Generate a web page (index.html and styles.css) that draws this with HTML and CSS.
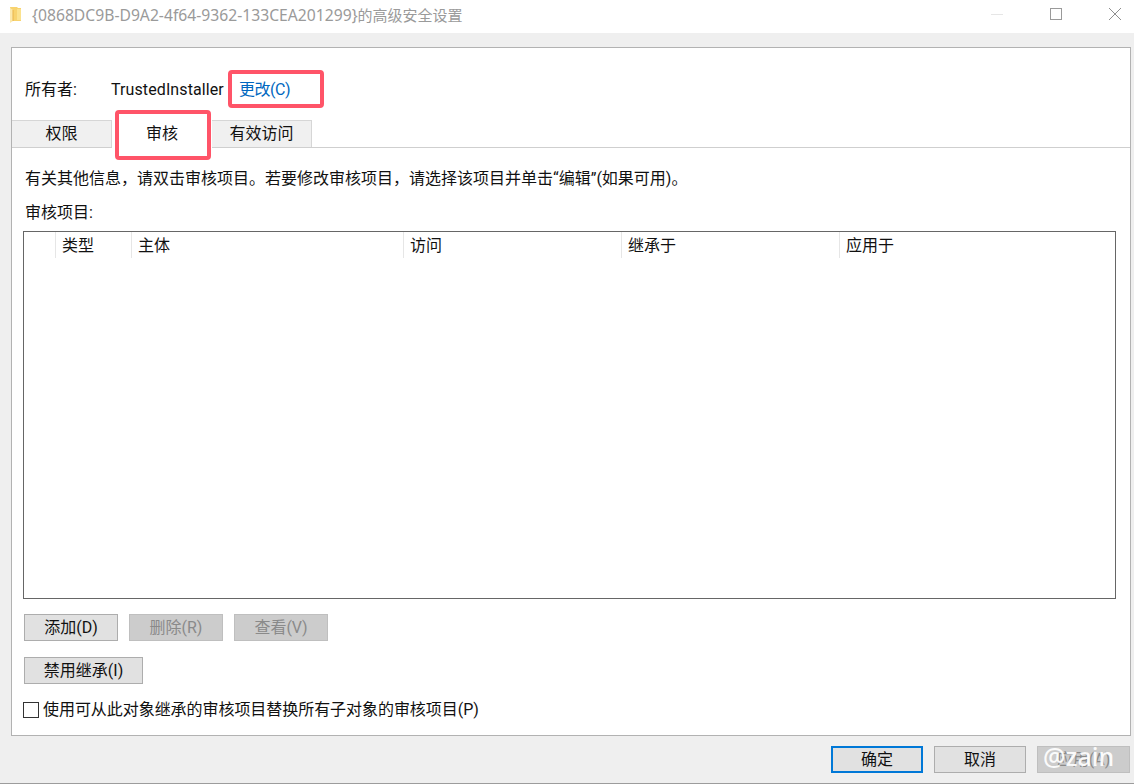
FILE: index.html
```html
<!DOCTYPE html>
<html lang="zh-CN">
<head>
<meta charset="utf-8">
<title>高级安全设置</title>
<link rel="stylesheet" href="styles.css">
</head>
<body>
<div class="window">
  <header class="titlebar">
    <svg class="folder" width="14" height="18" viewBox="0 0 14 18"><path d="M1 1h7l1 1h3v13H3z" fill="#f8d36f"/><path d="M8 3h4v11H8z" fill="#fbe28e"/><path d="M1 2l3 2v11l-3 2z" fill="#fce9ae"/><path d="M4 4v11" stroke="#e8b44a" fill="none"/></svg>
    <span class="title"><span class="title-id">{0868DC9B-D9A2-4f64-9362-133CEA201299}</span>的高级安全设置</span>
    <div class="controls">
      <svg class="ctl" width="14" height="14" viewBox="0 0 14 14"><path d="M1 7.5h12" stroke="#e6e6e6" fill="none"/></svg>
      <svg class="ctl" width="14" height="14" viewBox="0 0 14 14"><rect x="1.5" y="1.5" width="11" height="11" fill="none" stroke="#9a9a9a"/></svg>
      <svg class="ctl" width="14" height="14" viewBox="0 0 14 14"><path d="M1 1l12 12M13 1L1 13" stroke="#8f8f8f" fill="none"/></svg>
    </div>
  </header>
  <main class="panel">
    <div class="owner">
      <span class="owner-label">所有者:</span>
      <span class="owner-name">TrustedInstaller</span>
      <a class="owner-link">更改(C)</a>
    </div>
    <div class="tabs">
      <div class="tab tab-perm">权限</div>
      <div class="tab tab-active">审核</div>
      <div class="tab tab-eff">有效访问</div>
    </div>
    <section class="content">
      <p class="info">有关其他信息，请双击审核项目。若要修改审核项目，请选择该项目并单击“编辑”(如果可用)。</p>
      <p class="list-label">审核项目:</p>
      <div class="list">
        <div class="list-head">
          <span class="col col-0"></span>
          <span class="col col-1">类型</span>
          <span class="col col-2">主体</span>
          <span class="col col-3">访问</span>
          <span class="col col-4">继承于</span>
          <span class="col col-5">应用于</span>
        </div>
      </div>
      <div class="row-btns">
        <button class="btn btn-std">添加(D)</button>
        <button class="btn btn-std btn-off">删除(R)</button>
        <button class="btn btn-std btn-off">查看(V)</button>
      </div>
      <button class="btn btn-inherit">禁用继承(I)</button>
      <label class="check"><span class="box"></span>使用可从此对象继承的审核项目替换所有子对象的审核项目(P)</label>
    </section>
    <span class="mark mark-link"></span>
    <span class="mark mark-tab"></span>
  </main>
  <footer class="actions">
    <button class="btn btn-act btn-default">确定</button>
    <button class="btn btn-act">取消</button>
    <button class="btn btn-act btn-off">应用(A)</button>
  </footer>
  <div class="edge"></div>
  <span class="watermark">@zain</span>
</div>
</body>
</html>
```
FILE: styles.css
```css
* { box-sizing: border-box; }
html, body { margin: 0; padding: 0; }
body {
  width: 1134px;
  height: 784px;
  overflow: hidden;
  background: #efefef;
  color: #111;
  font: 16px/20px Roboto, "Noto Sans CJK SC", sans-serif;
}
.window { position: relative; width: 1134px; height: 784px; display: flex; flex-direction: column; }
.titlebar {
  height: 33px;
  background: #fff;
  display: flex;
  align-items: center;
  padding-left: 9px;
  flex: none;
}
.folder { flex: none; margin: -3px 9px 0 0; }
.title { color: #9a9a9a; font-size: 15px; white-space: nowrap; margin-top: -3px; }
.title-id { font-family: "Noto Sans", sans-serif; font-size: 15.7px; }
.controls { margin-left: auto; display: flex; gap: 45px; padding-right: 12px; margin-top: -5px; }
.panel {
  position: relative;
  margin: 14px 3px 0 11px;
  height: 689px;
  background: #fff;
  border: 1px solid #b2b2b2;
  flex: none;
}
.owner { display: flex; align-items: center; height: 20px; margin-top: 32px; padding-left: 13px; }
.owner-label { width: 86px; }
.owner-name { width: 128px; white-space: nowrap; letter-spacing: .1px; }
.owner-link { color: #0067c0; letter-spacing: -.5px; }
.tabs { display: flex; margin-top: 20px; height: 28px; border-bottom: 1px solid #cfcfcf; }
.tab {
  height: 27px;
  text-align: center;
  line-height: 26px;
  background: #f0f0f0;
  border: 1px solid #d6d6d6;
  border-bottom: 0;
  border-left: 0;
}
.tab-perm { width: 100px; }
.tab-active { width: 100px; height: 28px; background: #fff; border: 0; line-height: 28px; }
.tab-eff { width: 100px; }
.content { padding: 0 14px 0 11px; }
.info { margin: 21px 0 0 2px; white-space: nowrap; }
.list-label { margin: 14px 0 0 2px; }
.list {
  height: 368px;
  margin-top: 8px;
  border: 1px solid #666;
}
.list-head { display: flex; height: 26px; }
.col { display: block; padding-left: 6px; border-right: 1px solid #e6e6e6; height: 26px; line-height: 27px; flex: none; }
.col-0 { width: 32px; }
.col-1 { width: 76px; }
.col-2 { width: 272px; }
.col-3 { width: 218px; }
.col-4 { width: 218px; }
.col-5 { width: 275px; border-right: 0; }
.btn {
  display: block;
  height: 27px;
  padding: 0;
  background: #e1e1e1;
  border: 1px solid #adadad;
  border-radius: 0;
  color: #111;
  font: inherit;
  line-height: 24px;
  text-align: center;
}
.btn-off { background: #cccccc; border-color: #bfbfbf; color: #8a8a8a; }
.row-btns { display: flex; gap: 11px; margin: 15px 0 0 1px; }
.btn-std { width: 94px; }
.btn-inherit { width: 119px; margin: 16px 0 0 1px; }
.check { display: flex; align-items: center; margin-top: 16px; height: 20px; white-space: nowrap; letter-spacing: -.05px; }
.box { width: 16px; height: 16px; border: 1px solid #333; background: #fff; margin-right: 4px; flex: none; }
.mark { position: absolute; border: 4px solid #ff5468; border-radius: 4px; pointer-events: none; }
.mark-link { left: 216px; top: 22px; width: 96px; height: 38px; }
.mark-tab { left: 103px; top: 62px; width: 96px; height: 50px; }
.actions { display: flex; justify-content: flex-end; gap: 11px; padding: 10px 4px 0 0; height: 46px; flex: none; }
.btn-act { width: 92px; }
.actions .btn-act:last-child { width: 93px; }
.btn-default { border: 2px solid #0078d7; }
.edge { position: absolute; left: 0; right: 0; bottom: 0; height: 1px; background: #9c9c9c; }
.watermark {
  position: absolute;
  left: 1043px;
  top: 741px;
  color: #fff;
  opacity: .92;
  font-family: "Noto Sans", sans-serif;
  font-weight: 500;
  font-size: 25px;
  line-height: 30px;
}
```
